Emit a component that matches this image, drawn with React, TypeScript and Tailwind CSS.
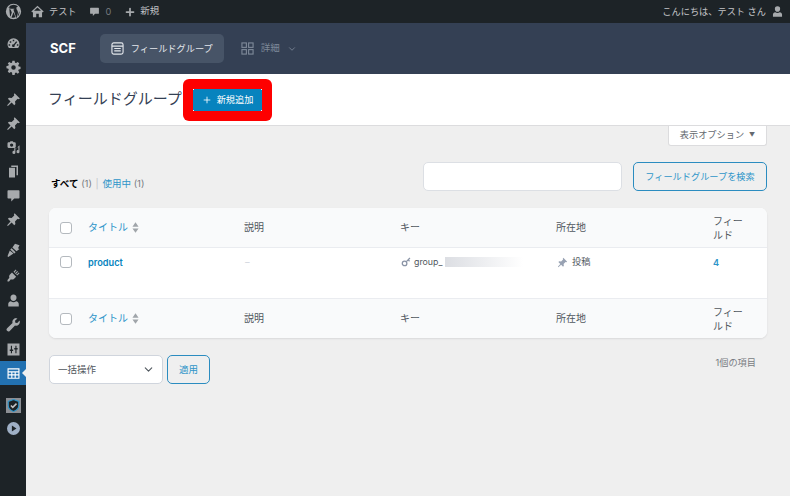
import React from "react";
import { Plus, ChevronDown } from "lucide-react";

const font = { fontFamily: '"Inter","Noto Sans CJK JP",sans-serif' };

function Wp() {
  return (
    <svg viewBox="0 0 20 20" className="w-[17px] h-[17px]" fill="#a7aaad">
      <path d="M10 1a9 9 0 1 0 0 18 9 9 0 0 0 0-18Zm0 1a8 8 0 0 1 5.4 2.1c-1.2 0-2 1-2 2 0 1 .6 1.7 1.1 2.6.4.7.7 1.5.7 2.7 0 .9-.3 1.9-.8 3.3l-1 3.2-3.5-10.4.9-.1c.4 0 .4-.7 0-.7l-2.5.1-2.5-.1c-.5 0-.5.7 0 .7l.8.1 1.4 3.7-1.9 5.8L5 6.3l.9-.1c.4 0 .4-.7 0-.7H3.9A8 8 0 0 1 10 2ZM2.7 7a8 8 0 0 0 4.2 10.4L2.8 7Zm7.4 3.8 2.2 6.1a8 8 0 0 1-4.7.1l2.5-6.2Zm6.1-3.6a8 8 0 0 1-1.6 8.9l2-5.9c.4-1 .5-1.7.5-2.4l-.1-.6Z" />
    </svg>
  );
}

function SideIcon({ d, active }: { d: string; active?: boolean }) {
  return (
    <svg viewBox="0 0 20 20" className="w-[15px] h-[15px]" fill={active ? "#fff" : "#a7aaad"}>
      <path d={d} />
    </svg>
  );
}

const pin = "M11.5 1.5 18.5 8.5 17 9.5 15.5 9 12 12.5 12.5 16 11 17.5 7.5 14 2.5 18.5 1.5 17.5 6 12.5 2.500 9 4 7.500 7.500 8 11 4.500 10.500 3Z";
const gauge = "M10 3a8 8 0 0 0-8 8c0 2 .8 3.800 2 5h12c1.200-1.200 2-3 2-5a8 8 0 0 0-8-8Zm-1 2h2v2H9V5ZM5 7h2v2H5V7Zm8.500 0 1.500 1-3.500 4.200a1.800 1.800 0 1 1-1.300-1L13.500 7ZM3.500 11h2v2h-2v-2Zm11 0h2v2h-2v-2Z";
const gear = "M8.500 1h3l.5 2.500 1.500.6L15.700 2.700l2 2-1.400 2.200.6 1.600 2.500.5v3l-2.500.5-.6 1.500 1.400 2.200-2 2-2.200-1.400-1.500.6-.5 2.500h-3L8 16.500l-1.500-.6-2.200 1.400-2-2 1.400-2.200-.6-1.500L.6 11.100v-3l2.500-.5.6-1.600L2.300 4.700l2-2 2.200 1.400L8 3.500 8.500 1ZM10 7a3 3 0 1 0 0 6 3 3 0 0 0 0-6Z";
const media = "M3 3h2l1-1.500h3L10 3h1.500A1.500 1.500 0 0 1 13 4.500V9a1.500 1.500 0 0 1-1.500 1.500h-8A1.500 1.500 0 0 1 2 9V4.500A1.500 1.500 0 0 1 3 3Zm4.500 1.500a2.200 2.200 0 1 0 0 4.400 2.200 2.200 0 0 0 0-4.400ZM18 7v8.500a2 2 0 1 1-1.500-1.900V9.500l-4 1v6a2 2 0 1 1-1.500-1.900V11h3l4-4Z";
const pages = "M7 2h9v13h-2V4H7V2ZM4 5h8v13H4V5Z";
const bubble = "M3 3h14a1 1 0 0 1 1 1v9a1 1 0 0 1-1 1h-6l-4 4v-4H3a1 1 0 0 1-1-1V4a1 1 0 0 1 1-1Z";
const brush = "M18 3 12 1 8.500 6 14 11l4-3-2-1 2-4ZM7.500 7l-1.800 1.800L11 14l1.800-1.800L7.500 7Zm-2.500 3L2 17.500l1 1L10 14l-5-4Z";
const plug = "M13 2 10 5l5 5 3-3-1-1-2.500 2.500-1-1L16 5l-1-1-2.500 2.500-1-1L14 3l-1-1ZM8 6 5 9c-1 1-1 2.800-.5 4L2 16v2h2l2.500-3c1.200.5 3 .5 4-.5l3-3L8 6Z";
const user = "M10 2a4 4 0 0 1 4 4.500c0 2-1.600 4-4 4s-4-2-4-4A4 4 0 0 1 10 2Zm-3.500 9c1 .8 2.200 1.200 3.500 1.200s2.500-.4 3.500-1.200c2 .4 3.500 1.600 3.500 3.500V18H3v-3.500C3 12.600 4.500 11.400 6.500 11Z";
const wrench = "M13.500 1.500a5 5 0 0 1 1.800.4L12 5l.5 2.500L15 8l3.100-3.300A5 5 0 0 1 12 11.300L5 18.500a1.800 1.800 0 0 1-3.500-3.500L8.700 8A5 5 0 0 1 13.500 1.500Z";
const settings = "M2 2h16v16H2V2Zm4.500 3v5H5v2h1.500v3h1.500v-3h1.500v-2H8V5H6.500Zm6 0v3H11v2h1.500v5H14v-5h1.500V8H14V5h-1.500Z";
const table = "M2 3h16v14H2V3Zm1.500 1.500v2.500h13V4.500h-13Zm0 4v2.500h3.500V8.500H3.500Zm5 0v2.500h3V8.500h-3Zm4.500 0v2.500h3.500V8.500H13Zm-9.500 4v3h3.500v-3H3.500Zm5 0v3h3v-3h-3Zm4.500 0v3h3.500v-3H13Z";

function Side({ d, cls }: { d: string; cls: string }) {
  return (
    <div className={`flex justify-center ${cls}`}>
      <SideIcon d={d} />
    </div>
  );
}

function Box() {
  return <span className="block w-[12px] h-[12px] rounded-[3px] border border-[#b4b9be] bg-white" />;
}

function Sort() {
  return (
    <svg viewBox="0 0 8 12" className="w-[7px] h-[11px]" fill="#a0a5aa">
      <path d="M4 0 7.500 5h-7ZM4 12 .5 7h7Z" />
    </svg>
  );
}

function HeadRow({ border }: { border: string }) {
  return (
    <div className={`grid grid-cols-[39px_156px_156px_156px_157px_54px] items-center h-[39px] bg-[#f9fafb] text-[10px] ${border}`}>
      <div className="pl-[11px]"><Box /></div>
      <div className="flex items-center gap-[4px] text-[#2e95c9]">タイトル<Sort /></div>
      <div>説明</div>
      <div>キー</div>
      <div>所在地</div>
      <div className="leading-[14px] w-[36px]">フィールド</div>
    </div>
  );
}

export default function App() {
  return (
    <div style={font} className="w-[790px] h-[496px] overflow-hidden flex flex-col bg-[#efefef] text-[9.2px] text-[#50575e]">
      <div className="h-[23px] shrink-0 bg-[#1d2327] flex items-center text-[#c3c4c7]">
        <div className="w-[26px] flex justify-center"><Wp /></div>
        <div className="flex items-center gap-[5px] ml-[5px]">
          <svg viewBox="0 0 20 20" className="w-[13px] h-[13px]" fill="#a7aaad">
            <path d="M10 1 0.500 10 2 11.500 3 10.500V19H8V13.500H12V19H17V10.500L18 11.500 19.500 10 10 1ZM10 3.800 15 8.500V9H5V8.500L10 3.800Z" />
          </svg>
          <span>テスト</span>
        </div>
        <div className="flex items-center gap-[6px] ml-[12px]">
          <svg viewBox="0 0 20 20" className="w-[11px] h-[11px]" fill="#a7aaad"><path d={bubble} /></svg>
          <span className="text-[#757a7f]">0</span>
        </div>
        <div className="flex items-center gap-[4px] ml-[13px]">
          <Plus size={12} color="#a7aaad" strokeWidth={3.5} />
          <span className="text-[9.5px]">新規</span>
        </div>
        <div className="ml-auto flex items-center gap-[5px] pr-[6px]">
          <span>こんにちは、テスト さん</span>
          <svg viewBox="0 0 20 20" className="w-[13px] h-[13px]" fill="#a7aaad"><path d={user} /></svg>
        </div>
      </div>
      <div className="flex flex-1 min-h-0">
        <div className="w-[26px] shrink-0 bg-[#1d2327] flex flex-col">
          <Side d={gauge} cls="mt-[13px]" />
          <Side d={gear} cls="mt-[9px]" />
          <Side d={pin} cls="mt-[17px]" />
          <Side d={pin} cls="mt-[9px]" />
          <Side d={media} cls="mt-[9px]" />
          <Side d={pages} cls="mt-[9px]" />
          <Side d={bubble} cls="mt-[9px]" />
          <Side d={pin} cls="mt-[9px]" />
          <Side d={brush} cls="mt-[16px]" />
          <Side d={plug} cls="mt-[10px]" />
          <Side d={user} cls="mt-[10px]" />
          <Side d={wrench} cls="mt-[9px]" />
          <Side d={settings} cls="mt-[10px]" />
          <div className="relative mt-[4px] h-[24px] bg-[#2271b1] flex items-center justify-center">
            <SideIcon d={table} active />
            <span className="absolute right-0 top-[8px] border-y-[4px] border-r-[4px] border-y-transparent border-r-[#efefef]" />
          </div>
          <div className="flex justify-center mt-[13px]">
            <svg viewBox="0 0 20 20" className="w-[15px] h-[15px]">
              <rect width="20" height="20" fill="#8c8f94" />
              <path d="M10 2 17 4.500V10c0 4-3 6.500-7 8-4-1.500-7-4-7-8V4.500Z" fill="#1d2327" stroke="#2e95c9" strokeWidth="1.500" />
              <path d="M6.500 10 9 12.500 14 7.500" fill="none" stroke="#c3c4c7" strokeWidth="2" />
            </svg>
          </div>
          <div className="flex justify-center mt-[9px]">
            <svg viewBox="0 0 20 20" className="w-[13px] h-[13px]">
              <circle cx="10" cy="10" r="10" fill="#9fb0c6" />
              <path d="M7.500 5.500 14.500 10 7.500 14.500Z" fill="#1d2327" />
            </svg>
          </div>
        </div>
        <div className="flex-1 min-w-0 flex flex-col">
          <div className="h-[51px] shrink-0 bg-[#344054] flex items-center pl-[24px]">
            <span className="font-bold text-[13px] text-white">SCF</span>
            <div className="ml-[24px] h-[29px] w-[124px] rounded-[5px] bg-[#475467] flex items-center pl-[11px] gap-[7px] text-[#e4e7ec]">
              <svg viewBox="0 0 14 14" className="w-[13px] h-[13px]" fill="none" stroke="#e4e7ec" strokeWidth="1.200">
                <rect x="1" y="1" width="12" height="12" rx="2" />
                <path d="M1 4.500h12M3.500 7h7M3.500 9.500h7" />
              </svg>
              <span>フィールドグループ</span>
            </div>
            <div className="ml-[17px] flex items-center gap-[7px] text-[#7e8999]">
              <svg viewBox="0 0 14 14" className="w-[13px] h-[13px]" fill="none" stroke="#7e8999" strokeWidth="1.200">
                <rect x="1" y="1" width="4.800" height="4.800" />
                <rect x="8.200" y="1" width="4.800" height="4.800" />
                <rect x="1" y="8.200" width="4.800" height="4.800" />
                <rect x="8.200" y="8.200" width="4.800" height="4.800" />
              </svg>
              <span className="text-[9.5px]">詳細</span>
              <ChevronDown size={10} color="#7e8999" />
            </div>
          </div>
          <div className="h-[52px] shrink-0 bg-white border-b border-[#dcdcde] flex items-center pl-[22px]">
            <span className="text-[15px] text-[#344054] w-[135px]">フィールドグループ</span>
            <div className="bg-[#fe0000] rounded-[6px] p-[10px] flex">
              <div className="relative h-[22px] w-[69px] bg-[#0783be] flex items-center justify-center gap-[5px] text-white">
                <Plus size={10} color="#fff" strokeWidth={2} />
                <span>新規追加</span>
                <span className="absolute left-0 top-0 w-px h-px bg-white" />
                <span className="absolute right-0 top-0 w-px h-px bg-white" />
                <span className="absolute left-0 bottom-0 w-px h-px bg-white" />
                <span className="absolute right-0 bottom-0 w-px h-px bg-white" />
              </div>
            </div>
          </div>
          <div className="flex justify-end pr-[23px]">
            <div className="w-[99px] h-[20px] pb-[2px] bg-white border border-t-0 border-[#dcdcde] rounded-b-[3px] flex items-center justify-center gap-[5px] text-[#646970]">
              <span>表示オプション</span>
              <span className="text-[6px]">▼</span>
            </div>
          </div>
          <div className="flex items-center mt-[16px] pl-[25px] pr-[23px]">
            <div className="text-[#787c82] mt-[15px] text-[9.5px]">
              <b className="text-black font-semibold">すべて</b> (1) <span className="text-[#c3c4c7] mx-[1px]">|</span> <span className="text-[#2e95c9]">使用中</span> (1)
            </div>
            <div className="ml-auto w-[199px] h-[29px] bg-white border border-[#dcdfe4] rounded-[5px]" />
            <div className="ml-[11px] w-[134px] h-[29px] border border-[#2b8cc0] rounded-[5px] flex items-center justify-center text-[#2e95c9]">フィールドグループを検索</div>
          </div>
          <div className="mx-[23px] mt-[17px] rounded-[7px] bg-white shadow-[0_1px_2px_rgba(16,24,40,0.1)] overflow-hidden">
            <HeadRow border="border-b border-[#eaecf0] h-[40px]" />
            <div className="grid grid-cols-[39px_156px_156px_156px_157px_54px] h-[51px] pt-[7px] border-b border-[#eaecf0] items-start">
              <div className="pl-[11px] pt-[1px]"><Box /></div>
              <div className="font-semibold text-[#0783be] pt-[1px]">product</div>
              <div className="text-[#d0d5dd] pl-[1px]">–</div>
              <div className="flex items-center gap-[3px] pl-[1px]">
                <svg viewBox="0 0 14 14" className="w-[10px] h-[10px]" fill="none" stroke="#8a94a6" strokeWidth="1.800">
                  <circle cx="5" cy="9" r="3.200" />
                  <path d="M7.500 6.500 12.500 1.500M10 4l2 2" />
                </svg>
                <span className="text-[8.8px]">group_</span>
                <span className="w-[78px] h-[10px] bg-gradient-to-r from-[#dcdee3] to-white" />
              </div>
              <div className="flex items-center gap-[4px] pl-[1px]">
                <svg viewBox="0 0 20 20" className="w-[11px] h-[11px]" fill="#98a2b3"><path d={pin} /></svg>
                <span>投稿</span>
              </div>
              <div className="font-semibold text-[#2e95c9] pt-[1px]">4</div>
            </div>
            <HeadRow border="" />
          </div>
          <div className="flex items-start mt-[17px] pl-[23px] pr-[34px]">
            <div className="w-[114px] h-[29px] bg-white border border-[#d0d5dd] rounded-[5px] flex items-center justify-between pl-[8px] pr-[7px] text-[9.5px]">
              <span>一括操作</span>
              <ChevronDown size={13} color="#50575e" />
            </div>
            <div className="ml-[4px] w-[43px] h-[29px] border border-[#2b8cc0] rounded-[5px] flex items-center justify-center text-[#2e95c9] text-[9.5px]">適用</div>
            <div className="ml-auto text-[#787c82] mt-[1px]">1個の項目</div>
          </div>
        </div>
      </div>
    </div>
  );
}
